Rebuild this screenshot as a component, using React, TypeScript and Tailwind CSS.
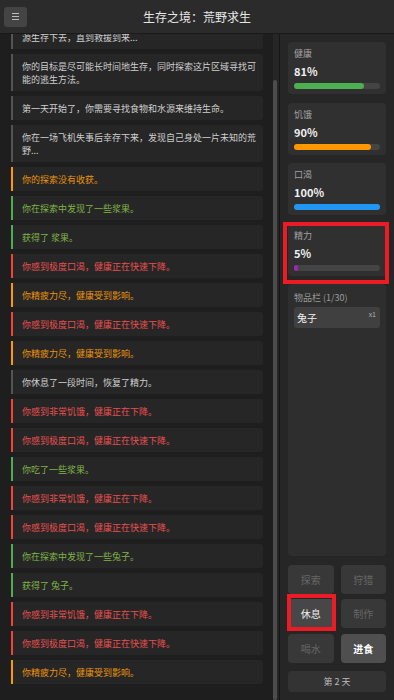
import React from 'react';

type Kind = 'info' | 'warn' | 'good' | 'bad';

const logs: [string, Kind][] = [
  ['你需要寻找食物、水和庇护所，利用有限的资\n源生存下去，直到救援到来...', 'info'],
  ['你的目标是尽可能长时间地生存，同时探索这片区域寻找可能的逃生方法。', 'info'],
  ['第一天开始了，你需要寻找食物和水源来维持生命。', 'info'],
  ['你在一场飞机失事后幸存下来，发现自己身处一片未知的荒野...', 'info'],
  ['你的探索没有收获。', 'warn'],
  ['你在探索中发现了一些浆果。', 'good'],
  ['获得了 浆果。', 'good'],
  ['你感到极度口渴，健康正在快速下降。', 'bad'],
  ['你精疲力尽，健康受到影响。', 'warn'],
  ['你感到极度口渴，健康正在快速下降。', 'bad'],
  ['你精疲力尽，健康受到影响。', 'warn'],
  ['你休息了一段时间，恢复了精力。', 'info'],
  ['你感到非常饥饿，健康正在下降。', 'bad'],
  ['你感到极度口渴，健康正在快速下降。', 'bad'],
  ['你吃了一些浆果。', 'good'],
  ['你感到非常饥饿，健康正在下降。', 'bad'],
  ['你感到极度口渴，健康正在快速下降。', 'bad'],
  ['你在探索中发现了一些兔子。', 'good'],
  ['获得了 兔子。', 'good'],
  ['你感到非常饥饿，健康正在下降。', 'bad'],
  ['你感到极度口渴，健康正在快速下降。', 'bad'],
  ['你精疲力尽，健康受到影响。', 'warn'],
];

const kindStyle: Record<Kind, string> = {
  info: 'border-[#555555] text-[#cfcfcf]',
  warn: 'border-[#ff9800] text-[#e8940c]',
  good: 'border-[#4caf50] text-[#80b446]',
  bad: 'border-[#f44336] text-[#e65050]',
};

const stats = [
  { label: '健康', value: 81, bar: 'bg-[#4caf50]' },
  { label: '饥饿', value: 90, bar: 'bg-[#ff9800]' },
  { label: '口渴', value: 100, bar: 'bg-[#2196f3]' },
  { label: '精力', value: 5, bar: 'bg-[#9c27b0]', marked: true },
];

const actions = [
  { label: '探索', state: 'off' },
  { label: '狩猎', state: 'off' },
  { label: '休息', state: 'on', marked: true },
  { label: '制作', state: 'off' },
  { label: '喝水', state: 'off' },
  { label: '进食', state: 'main' },
];

const StatCard = ({ label, value, bar, marked }: { label: string; value: number; bar: string; marked?: boolean }) => (
  <div className="relative h-[52px] shrink-0 rounded-[4px] bg-[#303030] px-[6px] pt-[6px]">
    <div className="text-[9px] leading-[12px] text-[#a0a0a0]">{label}</div>
    <div className="mt-[4px] text-[11px] font-bold leading-[14px] text-[#f0f0f0]">{value}%</div>
    <div className="mt-[5px] h-[6px] rounded-full bg-[#444444]">
      <div className={`h-full rounded-full ${bar}`} style={{ width: `${value}%` }} />
    </div>
    {marked && (
      <div className="pointer-events-none absolute -top-[2px] -bottom-[8px] -left-[5px] -right-[3px] border-4 border-[#ed1c24]" />
    )}
  </div>
);

export default function App() {
  return (
    <div className="flex h-[700px] w-[394px] flex-col overflow-hidden bg-[#1e1e1e] font-['Noto_Sans_CJK_SC','Noto_Sans',sans-serif]">
      <header className="relative z-10 flex h-[34px] shrink-0 items-center border-b border-[#1a1a1a] bg-[#2b2b2b]">
        <div className="w-[31px] pl-[4px]">
          <button className="flex h-[20px] w-[23px] flex-col items-center justify-center gap-[2px] rounded-[3px] bg-[#444444]">
            <span className="h-px w-[7px] bg-[#bdbdbd]" />
            <span className="h-px w-[7px] bg-[#bdbdbd]" />
            <span className="h-px w-[7px] bg-[#bdbdbd]" />
          </button>
        </div>
        <h1 className="flex-1 text-center text-[12px] leading-[16px] text-[#e6e6e6]">生存之境：荒野求生</h1>
        <div className="w-[31px]" />
      </header>

      <div className="flex min-h-0 flex-1">
        <div className="flex w-[280px] shrink-0 border-r border-[#161616]">
          <div className="flex min-w-0 flex-1 flex-col justify-end gap-[5px] overflow-hidden pb-[16px] pl-[11px] pr-[10px]">
            {logs.map(([text, kind], i) => (
              <div
                key={i}
                className={`shrink-0 whitespace-pre-line rounded-r-[3px] border-l-2 bg-[#262626] py-[5.5px] pl-[9px] pr-[5px] text-[9px] leading-[13px] ${kindStyle[kind]}`}
              >
                {text}
              </div>
            ))}
          </div>
          <div className="flex w-[6px] flex-col bg-[#262626]">
            <div className="mt-[46px] w-[4px] flex-1 rounded-[2px] bg-[#4d4d4d]" />
          </div>
        </div>

        <aside className="flex flex-1 flex-col gap-[8.5px] bg-[#262626] px-[8px] py-[8px]">
          {stats.map((s) => (
            <StatCard key={s.label} {...s} />
          ))}

          <div className="flex-1 rounded-[4px] bg-[#2e2e2e] px-[6px] pt-[8px]">
            <div className="text-[9px] leading-[12px] text-[#9a9a9a]">物品栏 (1/30)</div>
            <div className="mt-[3px] flex h-[21px] items-start justify-between rounded-[3px] bg-[#404040] pl-[3px] pr-[4px]">
              <span className="text-[10px] leading-[21px] text-[#f0f0f0]">兔子</span>
              <span className="pt-[2px] text-[7px] leading-[10px] text-[#b0b0b0]">x1</span>
            </div>
          </div>

          <div className="grid grid-cols-2 gap-x-[7px] gap-y-[5.5px]">
            {actions.map((a) => (
              <div key={a.label} className="relative">
                <button
                  className={`flex h-[29px] w-full items-center justify-center rounded-[4px] text-[10px] ${
                    a.state === 'off'
                      ? 'bg-[#383838] text-[#666666]'
                      : a.state === 'main'
                        ? 'bg-[#4f4f4f] font-bold text-[#ffffff]'
                        : 'bg-[#474747] text-[#eeeeee]'
                  }`}
                >
                  {a.label}
                </button>
                {a.marked && (
                  <div className="pointer-events-none absolute -top-[5px] -bottom-[3px] -left-[1px] -right-[2px] border-4 border-[#ed1c24]" />
                )}
              </div>
            ))}
          </div>

          <div className="flex h-[21px] shrink-0 items-center justify-center rounded-[4px] bg-[#333333] text-[9px] text-[#bbbbbb]">
            第 2 天
          </div>
        </aside>
      </div>
    </div>
  );
}
